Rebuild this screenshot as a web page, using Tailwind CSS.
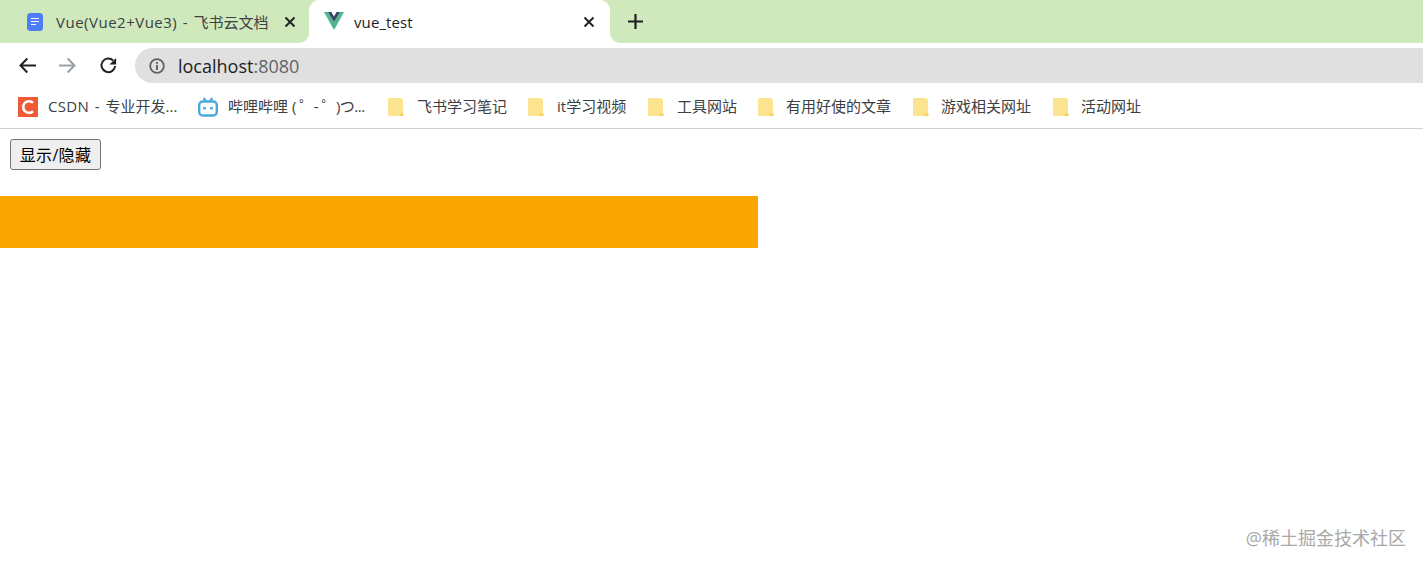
<!DOCTYPE html>
<html lang="zh-CN">
<head>
  <meta charset="UTF-8">
  <title>vue_test</title>
  <script src="https://cdn.jsdelivr.net/npm/@tailwindcss/browser@4"></script>
</head>
<body class="relative h-[566px] w-[1423px] overflow-hidden bg-white font-['Open_Sans','Noto_Sans_CJK_SC',sans-serif] text-[#3c4043]">

  <!-- tab strip -->
  <div class="flex h-[43px] bg-[#cfe9bd]">
    <div class="flex w-[309px] items-center pl-[27px] pr-[13px]">
      <svg class="h-[18px] w-4 shrink-0" viewBox="0 0 16 18">
        <rect width="16" height="18" rx="3.5" fill="#4f7cf7"/>
        <path d="M4 5.500h8M4 8.500h8M4 11.500h5" stroke="#fff" stroke-width="1.200"/>
      </svg>
      <span class="ml-[13px] flex-1 truncate text-[15px] leading-5"><span class="tracking-[0.5px] [word-spacing:1px]">Vue(Vue2+Vue3) - </span>飞书云文档</span>
      <svg class="h-3 w-3 shrink-0" viewBox="0 0 12 12"><path d="M1.500 1.500l9 9M10.500 1.500l-9 9" stroke="#202124" stroke-width="1.900"/></svg>
    </div>
    <div class="relative flex w-[301px] items-center rounded-t-[10px] bg-white pl-[15px] pr-[15px]">
      <div class="absolute -left-[10px] bottom-0 size-[10px] bg-white"><div class="size-full rounded-br-[10px] bg-[#cfe9bd]"></div></div>
      <div class="absolute -right-[10px] bottom-0 size-[10px] bg-white"><div class="size-full rounded-bl-[10px] bg-[#cfe9bd]"></div></div>
      <svg class="-mt-[2px] h-[18px] w-5 shrink-0" viewBox="0 0 20 18">
        <path d="M0 0h4l6 10L16 0h4L10 18z" fill="#4fb58c"/>
        <path d="M4 0h3.400L10 4.400 12.600 0H16l-6 10z" fill="#35495e"/>
      </svg>
      <span class="ml-[10px] flex-1 text-[15px] leading-5 tracking-[0.1px] text-[#202124]">vue_test</span>
      <svg class="h-3 w-3 shrink-0" viewBox="0 0 12 12"><path d="M1.500 1.500l9 9M10.500 1.500l-9 9" stroke="#202124" stroke-width="1.900"/></svg>
    </div>
    <div class="ml-[18px] flex items-center">
      <svg class="h-[15px] w-[15px]" viewBox="0 0 15 15"><path d="M7.500 0v15M0 7.500h15" stroke="#202124" stroke-width="2.200"/></svg>
    </div>
  </div>

  <!-- address row -->
  <div class="flex h-[45px] items-center pl-[19px]">
    <svg class="h-[17px] w-[17px] shrink-0" viewBox="0 0 17 17" fill="none"><path d="M17 8.500H1.500M8.300 1.500L1.500 8.500l6.800 7" stroke="#202124" stroke-width="2"/></svg>
    <svg class="ml-[23px] h-[17px] w-[17px] shrink-0" viewBox="0 0 17 17" fill="none"><path d="M0 8.500h15.500M8.700 1.500l6.800 7-6.800 7" stroke="#9aa0a6" stroke-width="2"/></svg>
    <svg class="ml-[23px] h-[19px] w-[19px] shrink-0" viewBox="0 0 20 20" fill="none">
      <path d="M17 10.500A7.200 7.200 0 1 1 14.900 4.700" stroke="#202124" stroke-width="2.100"/>
      <path d="M18 2v7h-7z" fill="#202124"/>
    </svg>
    <div class="ml-[17px] flex h-[35px] flex-1 items-center rounded-l-full bg-[#e0e0e0] pl-[14px]">
      <svg class="h-4 w-4 shrink-0" viewBox="0 0 16 16" fill="none">
        <circle cx="8" cy="8" r="6.800" stroke="#5f6368" stroke-width="1.800"/>
        <path d="M8 7v5M8 4v1.800" stroke="#5f6368" stroke-width="2"/>
      </svg>
      <span class="ml-[13px] text-[18px] leading-6 text-[#202124]">localhost<span class="text-[#5f6368]">:8080</span></span>
    </div>
  </div>

  <!-- bookmarks -->
  <div class="flex h-[41px] items-center border-b border-[#d0d0d0] pb-[3px] pl-[18px] text-[15px]">
    <div class="flex w-[180px] items-center">
      <div class="flex h-5 w-5 shrink-0 items-center justify-center bg-[#f05a35]">
        <svg class="h-4 w-4" viewBox="0 0 16 16" fill="none"><path d="M13 3.800A5.800 5.800 0 1 0 13 12.200" stroke="#fff" stroke-width="2.600"/></svg>
      </div>
      <span class="ml-[10px] whitespace-nowrap"><span class="tracking-[0.3px] [word-spacing:1.500px]">CSDN - </span>专业开发...</span>
    </div>
    <div class="flex w-[190px] items-center">
      <svg class="h-5 w-5 shrink-0" viewBox="0 0 20 20" fill="none">
        <rect x="1.200" y="4.500" width="17.600" height="14" rx="3.500" stroke="#4ba9dc" stroke-width="2.400"/>
        <path d="M5.500 1l3 3.500M14.500 1l-3 3.500" stroke="#4ba9dc" stroke-width="2"/>
        <path d="M6.500 10v2.500M13.500 10v2.500" stroke="#4ba9dc" stroke-width="2.600"/>
      </svg>
      <span class="ml-[10px] whitespace-nowrap">哔哩哔哩 <span class="tracking-[-0.5px]">( ゜- ゜)つ...</span></span>
    </div>
    <div class="flex w-[140px] items-center">
      <svg class="h-[18px] w-4 shrink-0" viewBox="0 0 16 18"><path d="M0 1.500A1.500 1.500 0 0 1 1.500 0h10.500A3 3 0 0 1 15 3v13.500A1.500 1.500 0 0 1 13.500 18H1.500A1.500 1.500 0 0 1 0 16.500z" fill="#fbe38f"/><path d="M11.500 15.500h4V18h-4z" fill="#f5cf5a"/></svg>
      <span class="ml-[13px] whitespace-nowrap">飞书学习笔记</span>
    </div>
    <div class="flex w-[120px] items-center">
      <svg class="h-[18px] w-4 shrink-0" viewBox="0 0 16 18"><path d="M0 1.500A1.500 1.500 0 0 1 1.500 0h10.500A3 3 0 0 1 15 3v13.500A1.500 1.500 0 0 1 13.500 18H1.500A1.500 1.500 0 0 1 0 16.500z" fill="#fbe38f"/><path d="M11.500 15.500h4V18h-4z" fill="#f5cf5a"/></svg>
      <span class="ml-[13px] whitespace-nowrap">it学习视频</span>
    </div>
    <div class="flex w-[110px] items-center">
      <svg class="h-[18px] w-4 shrink-0" viewBox="0 0 16 18"><path d="M0 1.500A1.500 1.500 0 0 1 1.500 0h10.500A3 3 0 0 1 15 3v13.500A1.500 1.500 0 0 1 13.500 18H1.500A1.500 1.500 0 0 1 0 16.500z" fill="#fbe38f"/><path d="M11.500 15.500h4V18h-4z" fill="#f5cf5a"/></svg>
      <span class="ml-[13px] whitespace-nowrap">工具网站</span>
    </div>
    <div class="flex w-[155px] items-center">
      <svg class="h-[18px] w-4 shrink-0" viewBox="0 0 16 18"><path d="M0 1.500A1.500 1.500 0 0 1 1.500 0h10.500A3 3 0 0 1 15 3v13.500A1.500 1.500 0 0 1 13.500 18H1.500A1.500 1.500 0 0 1 0 16.500z" fill="#fbe38f"/><path d="M11.500 15.500h4V18h-4z" fill="#f5cf5a"/></svg>
      <span class="ml-[12px] whitespace-nowrap">有用好使的文章</span>
    </div>
    <div class="flex w-[140px] items-center">
      <svg class="h-[18px] w-4 shrink-0" viewBox="0 0 16 18"><path d="M0 1.500A1.500 1.500 0 0 1 1.500 0h10.500A3 3 0 0 1 15 3v13.500A1.500 1.500 0 0 1 13.500 18H1.500A1.500 1.500 0 0 1 0 16.500z" fill="#fbe38f"/><path d="M11.500 15.500h4V18h-4z" fill="#f5cf5a"/></svg>
      <span class="ml-[12px] whitespace-nowrap">游戏相关网址</span>
    </div>
    <div class="flex items-center">
      <svg class="h-[18px] w-4 shrink-0" viewBox="0 0 16 18"><path d="M0 1.500A1.500 1.500 0 0 1 1.500 0h10.500A3 3 0 0 1 15 3v13.500A1.500 1.500 0 0 1 13.500 18H1.500A1.500 1.500 0 0 1 0 16.500z" fill="#fbe38f"/><path d="M11.500 15.500h4V18h-4z" fill="#f5cf5a"/></svg>
      <span class="ml-[12px] whitespace-nowrap">活动网址</span>
    </div>
  </div>

  <!-- page content -->
  <div class="pt-[10px]">
    <button class="ml-[10px] block h-[31px] w-[91px] rounded-[3px] border border-[#767676] bg-[#efefef] text-base leading-none tracking-[0.3px] text-black">显示/隐藏</button>
    <div class="mt-[26px] h-[52px] w-[758px] bg-[#fba500]"></div>
  </div>

  <!-- watermark -->
  <div class="absolute right-[17px] top-[526px] text-lg leading-6 text-[#a8a8a8]">@稀土掘金技术社区</div>
</body>
</html>
